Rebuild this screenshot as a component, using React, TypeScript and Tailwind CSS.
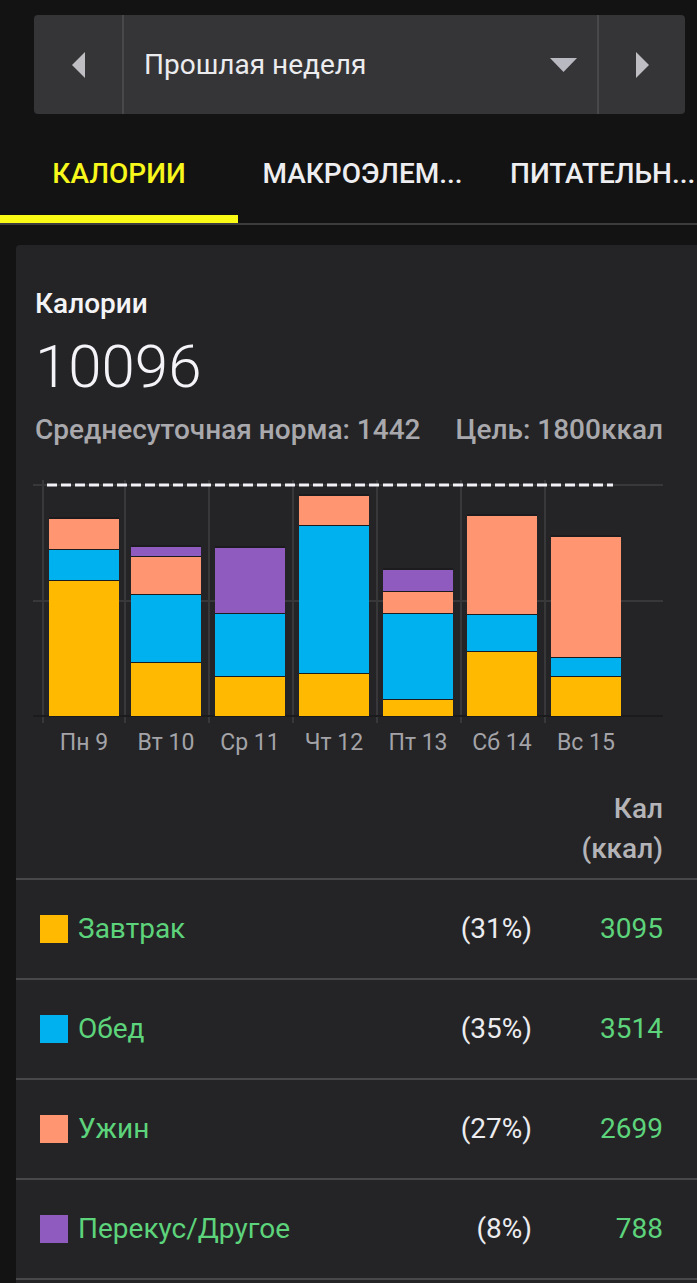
import React from 'react';

// Цвета приёмов пищи
const C = {
  breakfast: '#FFB900',
  lunch: '#00B1F0',
  dinner: '#FF9671',
  snack: '#8F5BBF',
};

type Seg = [string, number, number];

// сегменты столбцов: [цвет, верх, низ] в координатах страницы
const bars: { x: number; label: string; segs: Seg[] }[] = [
  { x: 49, label: 'Пн 9', segs: [[C.dinner, 518, 548], [C.lunch, 549, 579], [C.breakfast, 580, 715]] },
  { x: 131, label: 'Вт 10', segs: [[C.snack, 546, 555], [C.dinner, 556, 593], [C.lunch, 594, 661], [C.breakfast, 662, 715]] },
  { x: 215, label: 'Ср 11', segs: [[C.snack, 547, 612], [C.lunch, 613, 675], [C.breakfast, 676, 715]] },
  { x: 299, label: 'Чт 12', segs: [[C.dinner, 495, 524], [C.lunch, 525, 672], [C.breakfast, 673, 715]] },
  { x: 383, label: 'Пт 13', segs: [[C.snack, 569, 590], [C.dinner, 591, 612], [C.lunch, 613, 698], [C.breakfast, 699, 715]] },
  { x: 467, label: 'Сб 14', segs: [[C.dinner, 515, 613], [C.lunch, 614, 650], [C.breakfast, 651, 715]] },
  { x: 551, label: 'Вс 15', segs: [[C.dinner, 536, 656], [C.lunch, 657, 675], [C.breakfast, 676, 715]] },
];

const gridX = [43, 125, 209, 293, 377, 461, 545];

const rows = [
  { name: 'Завтрак', color: C.breakfast, pct: '(31%)', val: '3095' },
  { name: 'Обед', color: C.lunch, pct: '(35%)', val: '3514' },
  { name: 'Ужин', color: C.dinner, pct: '(27%)', val: '2699' },
  { name: 'Перекус/Другое', color: C.snack, pct: '(8%)', val: '788' },
];

function Chart() {
  // смещение: x -16 (левый край карточки), y -470
  const X = (v: number) => v - 16;
  const Y = (v: number) => v - 470;
  return (
    <svg width={681} height={286} className="block">
      {[485, 601].map((y) => (
        <line key={y} x1={X(33)} x2={X(663)} y1={Y(y)} y2={Y(y)} stroke="#38383b" strokeWidth={2} />
      ))}
      {gridX.map((x) => (
        <line key={x} x1={X(x)} x2={X(x)} y1={Y(480)} y2={Y(723)} stroke="#38383b" strokeWidth={2} />
      ))}
      <line x1={X(33)} x2={X(663)} y1={Y(716)} y2={Y(716)} stroke="#1b1b1d" strokeWidth={2} />
      {bars.map((b) => (
        <g key={b.label}>
          <rect x={X(b.x)} y={Y(b.segs[0][1] - 1)} width={70} height={715 - b.segs[0][1] + 1} fill="#1c1c1e" />
          {b.segs.map(([c, t, bt], i) => (
            <rect key={i} x={X(b.x)} y={Y(t + 1)} width={70} height={bt - t} fill={c} />
          ))}
          <text
            x={X(b.x + 35)}
            y={Y(750)}
            textAnchor="middle"
            fill="#a3a3a8"
            fontSize={23}
            fontFamily="Roboto, sans-serif"
          >
            {b.label}
          </text>
        </g>
      ))}
      <line
        x1={X(47)}
        x2={X(613)}
        y1={Y(485)}
        y2={Y(485)}
        stroke="#f2f2f7"
        strokeWidth={3}
        strokeDasharray="10 4"
      />
    </svg>
  );
}

export default function App() {
  return (
    <div className="min-h-[1283px] w-[697px] overflow-hidden bg-[#131313] font-['Roboto',sans-serif] text-white">
      {/* Выбор периода */}
      <div className="pt-[15px] pl-[34px] pr-[12px]">
        <div className="flex h-[99px] rounded-[4px] bg-[#353537]">
          <div className="flex w-[90px] items-center justify-center border-r-2 border-[#48484b]">
            <svg width={13} height={26} viewBox="0 0 13 26">
              <polygon points="13,0 13,26 0,13" fill="#bfbfc3" />
            </svg>
          </div>
          <div className="flex flex-1 items-center justify-between pl-[20px] pr-[20px] border-r-2 border-[#48484b]">
            <span className="text-[28px] text-[#ececef]">Прошлая неделя</span>
            <svg width={27} height={14} viewBox="0 0 27 14">
              <polygon points="0,0 27,0 13.5,14" fill="#b9b9c1" />
            </svg>
          </div>
          <div className="flex w-[86px] items-center justify-center">
            <svg width={13} height={26} viewBox="0 0 13 26">
              <polygon points="0,0 13,13 0,26" fill="#bfbfc3" />
            </svg>
          </div>
        </div>
      </div>

      {/* Вкладки */}
      <div className="flex border-b-2 border-[#3c3c3e]">
        <div className="w-[238px] flex flex-col items-center">
          <div className="pt-[45px] pb-[26px] text-[28px] leading-[30px] font-medium text-[#f7f71c]">КАЛОРИИ</div>
          <div className="h-[8px] w-full bg-[#fafa14]" />
        </div>
        <div className="w-[249px] pt-[45px] text-center text-[28px] leading-[30px] font-medium text-[#eeeef0] whitespace-nowrap">
          МАКРОЭЛЕМ...
        </div>
        <div className="flex-1 pl-[23px] pt-[45px] text-[28px] leading-[30px] font-medium text-[#eeeef0] whitespace-nowrap">
          ПИТАТЕЛЬН...
        </div>
      </div>

      {/* Карточка */}
      <div className="ml-[16px] mt-[20px] rounded-tl-[4px] bg-[#242426] pt-[43px]">
        <div className="pl-[19px] pr-[34px]">
          <div className="text-[28px] leading-[32px] font-medium text-[#f4f4f6]">Калории</div>
          <div className="mt-[15px] text-[60px] leading-[64px] font-light text-[#f4f4f8]">10096</div>
          <div className="mt-[15px] flex justify-between text-[28px] leading-[32px] font-medium text-[#a9a9ad]">
            <span>Среднесуточная норма: 1442</span>
            <span>Цель: 1800ккал</span>
          </div>
        </div>

        <div className="mt-[24px]">
          <Chart />
        </div>

        <div className="mt-[33px] pr-[34px] pb-[9px] text-right text-[28px] leading-[40px] font-medium text-[#b4b4b8]">
          <div>Кал</div>
          <div>(ккал)</div>
        </div>

        {rows.map((r) => (
          <div key={r.name} className="flex h-[100px] items-center border-t-2 border-[#48484b] pl-[24px] pr-[34px]">
            <div className="h-[28px] w-[28px] shrink-0" style={{ backgroundColor: r.color }} />
            <div className="ml-[10px] flex-1 text-[28px] text-[#5dd47b]">{r.name}</div>
            <div className="text-[28px] text-[#ececef]">{r.pct}</div>
            <div className="w-[131px] text-right text-[28px] text-[#5dd47b]">{r.val}</div>
          </div>
        ))}
        <div className="h-[40px] border-t-2 border-[#48484b]" />
      </div>
    </div>
  );
}
